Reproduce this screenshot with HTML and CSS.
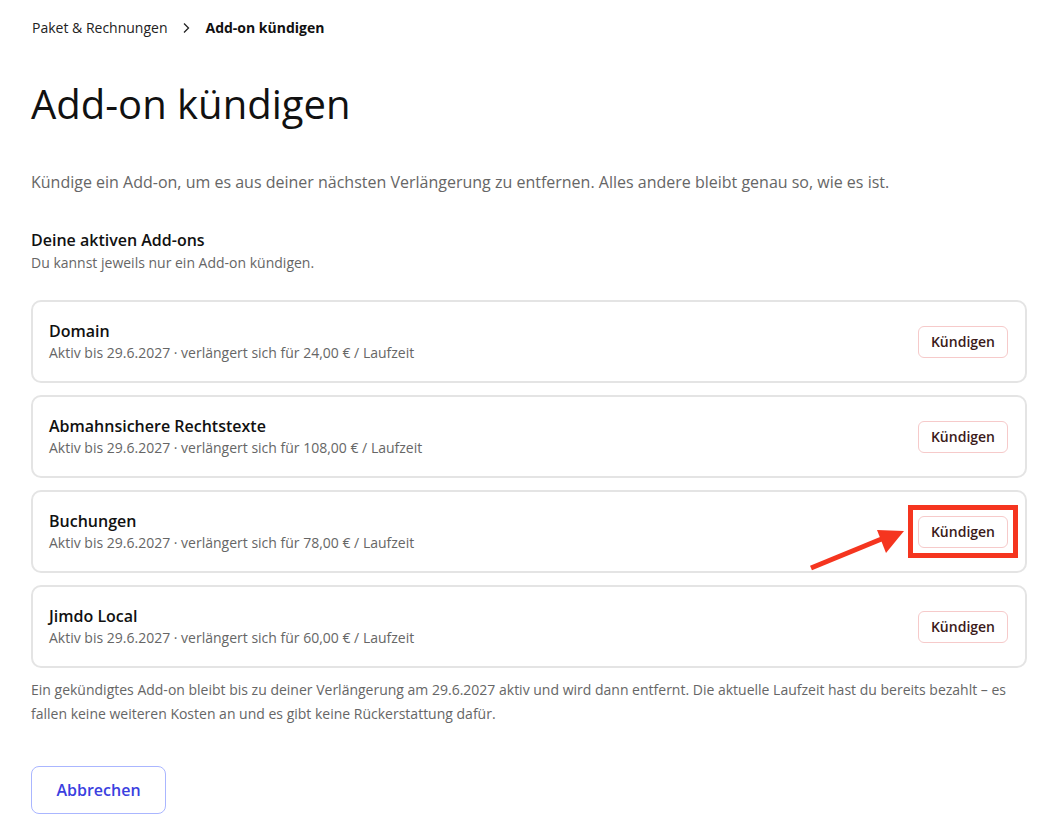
FILE: index.html
```html
<!DOCTYPE html>
<html lang="de">
<head>
  <meta charset="UTF-8" />
  <title>Add-on kündigen</title>
  <link rel="stylesheet" href="styles.css">
</head>
<body>
  <div class="page">

    <!-- Brotkrumen -->
    <nav class="crumbs">
      <a class="crumb-link">Paket &amp; Rechnungen</a>
      <svg class="crumb-sep" width="10" height="12" viewBox="0 0 10 12"><path d="M3 1.5 L7.5 6 L3 10.5" fill="none" stroke="#222" stroke-width="1.3"/></svg>
      <span class="crumb-current">Add-on kündigen</span>
    </nav>

    <h1 class="title">Add-on kündigen</h1>
    <p class="intro">Kündige ein Add-on, um es aus deiner nächsten Verlängerung zu entfernen. Alles andere bleibt genau so, wie es ist.</p>

    <h2 class="section-title">Deine aktiven Add-ons</h2>
    <p class="section-hint">Du kannst jeweils nur ein Add-on kündigen.</p>

    <!-- Liste der Add-ons -->
    <div class="addon-list">
      <div class="addon-card">
        <div class="addon-info">
          <div class="addon-name">Domain</div>
          <div class="addon-meta">Aktiv bis 29.6.2027 · verlängert sich für 24,00 € / Laufzeit</div>
        </div>
        <button class="cancel-button">Kündigen</button>
      </div>
      <div class="addon-card">
        <div class="addon-info">
          <div class="addon-name">Abmahnsichere Rechtstexte</div>
          <div class="addon-meta">Aktiv bis 29.6.2027 · verlängert sich für 108,00 € / Laufzeit</div>
        </div>
        <button class="cancel-button">Kündigen</button>
      </div>
      <div class="addon-card">
        <div class="addon-info">
          <div class="addon-name">Buchungen</div>
          <div class="addon-meta">Aktiv bis 29.6.2027 · verlängert sich für 78,00 € / Laufzeit</div>
        </div>
        <div class="marked">
          <button class="cancel-button">Kündigen</button>
          <span class="mark-box"></span>
          <svg class="mark-arrow" width="100" height="50" viewBox="0 0 100 50">
            <line x1="3" y1="44" x2="76" y2="14" stroke="#f5351f" stroke-width="5"/>
            <polygon points="96,7 69,6 78,29" fill="#f5351f"/>
          </svg>
        </div>
      </div>
      <div class="addon-card">
        <div class="addon-info">
          <div class="addon-name">Jimdo Local</div>
          <div class="addon-meta">Aktiv bis 29.6.2027 · verlängert sich für 60,00 € / Laufzeit</div>
        </div>
        <button class="cancel-button">Kündigen</button>
      </div>
    </div>

    <p class="footnote">Ein gekündigtes Add-on bleibt bis zu deiner Verlängerung am 29.6.2027 aktiv und wird dann entfernt. Die aktuelle Laufzeit hast du bereits bezahlt – es fallen keine weiteren Kosten an und es gibt keine Rückerstattung dafür.</p>

    <button class="back-button">Abbrechen</button>
  </div>
</body>
</html>
```

FILE: styles.css
```css
body {
  margin: 0;
  font-family: "Open Sans", "Noto Sans", sans-serif;
  color: #111;
  background: #fff;
}
.page { padding: 18px 37px 0 31px; }

.crumbs {
  display: flex;
  align-items: center;
  gap: 14px;
  font-size: 14px;
  line-height: 20px;
  padding-left: 1px;
}
.crumb-link { color: #222; }
.crumb-current { font-weight: 700; color: #111; }

.title {
  margin: 40px 0 0;
  font-size: 40px;
  font-weight: 400;
  line-height: 52px;
}
.intro {
  margin: 40px 0 0;
  font-size: 16px;
  line-height: 24px;
  color: #666;
}
.section-title {
  margin: 34px 0 0;
  font-size: 16px;
  font-weight: 600;
  line-height: 24px;
}
.section-hint {
  margin: 1px 0 0;
  font-size: 14px;
  line-height: 20px;
  color: #666;
}

.addon-list {
  display: flex;
  flex-direction: column;
  gap: 12px;
  margin-top: 27px;
}
.addon-card {
  display: flex;
  align-items: center;
  justify-content: space-between;
  height: 83px;
  box-sizing: border-box;
  padding: 0 17px 0 16px;
  border: 2px solid #e4e4e4;
  border-radius: 10px;
}
.addon-name {
  font-size: 16px;
  font-weight: 600;
  line-height: 22px;
}
.addon-meta {
  font-size: 14px;
  line-height: 22px;
  color: #666;
}
.cancel-button {
  font-family: inherit;
  font-size: 14px;
  font-weight: 600;
  color: #3b1a1a;
  background: #fff;
  border: 1px solid #f6caca;
  border-radius: 6px;
  height: 32px;
  padding: 0 12px;
}

.marked { position: relative; display: flex; }
.mark-box {
  position: absolute;
  left: -10px;
  top: -11px;
  right: -10px;
  bottom: -10px;
  border: 5px solid #f5351f;
}
.mark-arrow {
  position: absolute;
  left: -110px;
  top: 8px;
}

.footnote {
  margin: 10px 0 0;
  font-size: 14px;
  line-height: 24px;
  color: #666;
}
.back-button {
  margin-top: 40px;
  font-family: inherit;
  font-size: 16px;
  font-weight: 600;
  color: #3b3fe0;
  background: #fff;
  border: 1px solid #aab6ff;
  border-radius: 8px;
  height: 48px;
  width: 135px;
}
```
